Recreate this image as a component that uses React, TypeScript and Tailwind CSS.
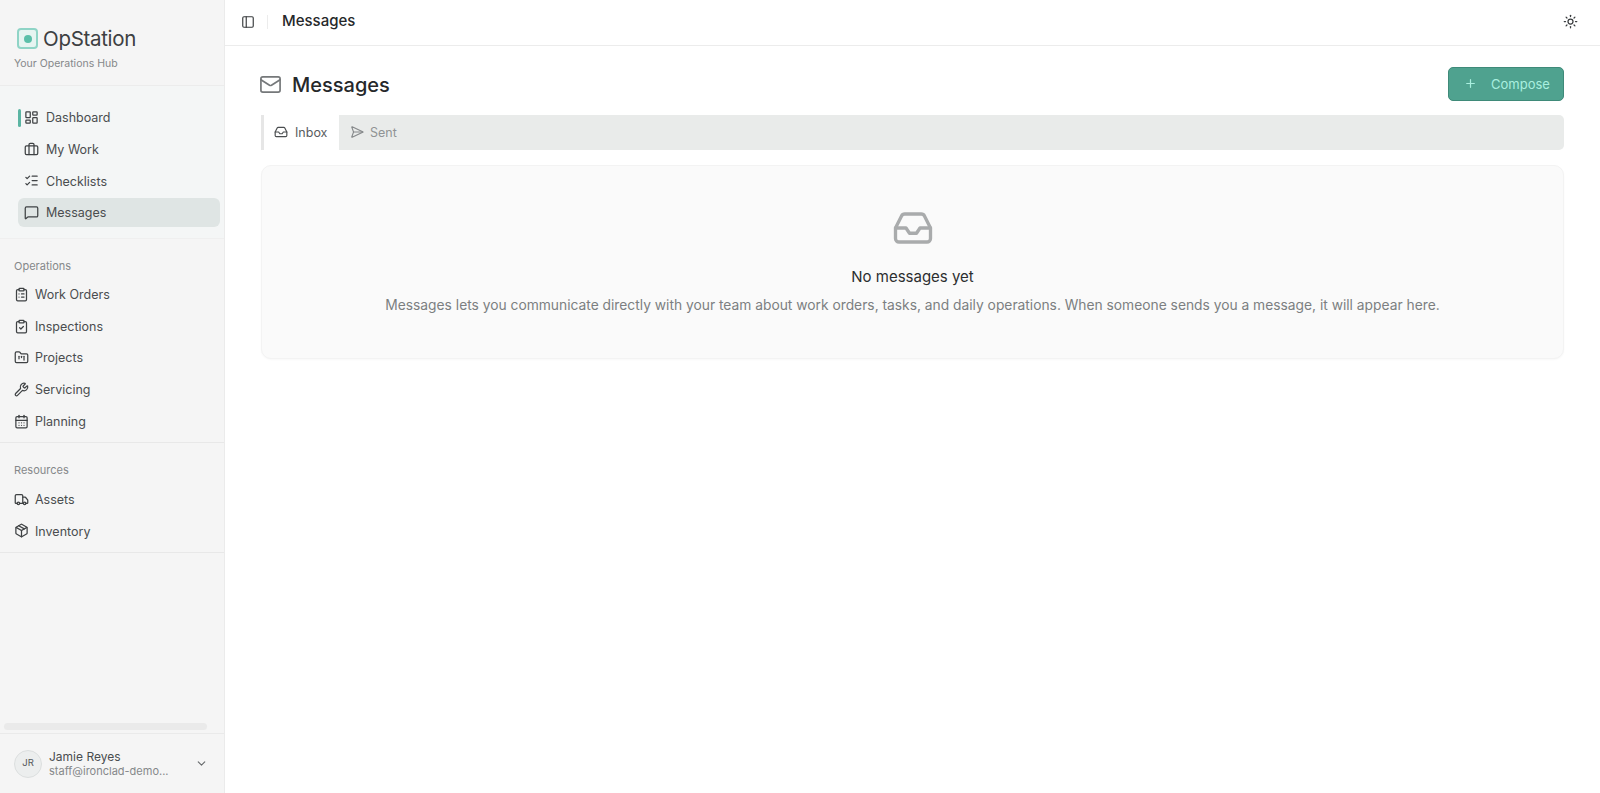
import {
  Briefcase,
  CalendarDays,
  ChevronDown,
  ClipboardCheck,
  ClipboardList,
  FolderKanban,
  Inbox,
  LayoutDashboard,
  ListChecks,
  Mail,
  MessageSquare,
  Package,
  PanelLeft,
  Plus,
  SendHorizontal,
  Sun,
  Truck,
  Wrench,
} from "lucide-react";

const mainNav = [
  { label: "Dashboard", icon: LayoutDashboard },
  { label: "My Work", icon: Briefcase },
  { label: "Checklists", icon: ListChecks },
  { label: "Messages", icon: MessageSquare, active: true },
];

const operations = [
  { label: "Work Orders", icon: ClipboardList },
  { label: "Inspections", icon: ClipboardCheck },
  { label: "Projects", icon: FolderKanban },
  { label: "Servicing", icon: Wrench },
  { label: "Planning", icon: CalendarDays },
];

const resources = [
  { label: "Assets", icon: Truck },
  { label: "Inventory", icon: Package },
];

function NavRow({ label, icon: Icon }: { label: string; icon: typeof Mail }) {
  return (
    <div className="flex h-[31.7px] items-center gap-[6px] pl-[14px] text-[12.5px] text-[#4a4d4f]">
      <Icon className="-mt-[2px] h-[15px] w-[15px] text-[#3f4244]" strokeWidth={2} />
      <span>{label}</span>
    </div>
  );
}

function Section({ title, items, top }: { title: string; items: typeof operations; top: string }) {
  return (
    <div className="border-b border-[#e8e8e8] pb-[4px]">
      <div className={`pl-[14px] pb-[6px] text-[11px] leading-[16px] text-[#85888a] ${top}`}>{title}</div>
      {items.map((item) => (
        <NavRow key={item.label} {...item} />
      ))}
    </div>
  );
}

export default function App() {
  return (
    <div className="flex h-[793px] w-[1600px] overflow-hidden bg-white font-['Inter',sans-serif] text-[#26282a]">
      <aside className="flex w-[225px] shrink-0 flex-col border-r border-[#ebebeb] bg-[#f5f5f5]">
        <div className="h-[86px] shrink-0 border-b border-[#ececec] pl-[14px] pt-[26px]">
          <div className="flex items-center gap-[5px] pl-[3px]">
            <div className="-mt-[1px] flex h-[21px] w-[21px] items-center justify-center rounded-[4px] border-2 border-[#8fd4c6] bg-[#e6f4f1]">
              <div className="h-[8px] w-[8px] rounded-full bg-[#5bbfa9]" />
            </div>
            <span className="text-[20.5px] leading-[26px] tracking-[-0.3px] text-[#3d4042]">OpStation</span>
          </div>
          <div className="mt-[5px] text-[10.5px] leading-[14px] text-[#85888a]">Your Operations Hub</div>
        </div>

        <div className="h-[153px] shrink-0 border-b border-[#efefef] bg-[#f4f6f6] pl-[18px] pr-[4px] pt-[17px]">
          {mainNav.map(({ label, icon: Icon, active }) => (
            <div
              key={label}
              className={`relative mb-[2.7px] flex h-[29px] items-center gap-[7px] rounded-[6px] pl-[6px] text-[12.5px] text-[#4a4d4f] ${active ? "bg-[#dfe5e4]" : ""}`}
            >
              {label === "Dashboard" && (
                <div className="absolute left-0 top-[6px] h-[18px] w-[3px] rounded-sm bg-[#5bb5a3]" />
              )}
              <Icon className="h-[15px] w-[15px] text-[#3f4244]" strokeWidth={2} />
              <span className="mt-[2px]">{label}</span>
            </div>
          ))}
        </div>

        <Section title="Operations" items={operations} top="pt-[18.5px]" />
        <Section title="Resources" items={resources} top="pt-[19.5px]" />

        <div className="mt-auto">
          <div className="mx-[4px] mb-[3px] h-[7px] w-[203px] rounded-full bg-[#eaeaea]" />
          <div className="flex h-[60px] items-center border-t border-[#eaeaea] pl-[14px] pr-[16px]">
            <div className="flex h-[28px] w-[28px] shrink-0 items-center justify-center rounded-full border border-[#dcdfdf] bg-[#eceeee] text-[9.5px] text-[#55585a]">
              JR
            </div>
            <div className="ml-[7px] min-w-0 flex-1">
              <div className="text-[12px] leading-[15px] text-[#4a4d4f]">Jamie Reyes</div>
              <div className="text-[11px] leading-[15px] text-[#85888a]">staff@ironclad-demo...</div>
            </div>
            <ChevronDown className="h-[13px] w-[13px] text-[#66696b]" />
          </div>
        </div>
      </aside>

      <main className="min-w-0 flex-1">
        <header className="flex h-[46px] items-center border-b border-[#ececec] pb-[2px] pl-[16px] pr-[22px]">
          <PanelLeft className="h-[14px] w-[14px] text-[#3a3d3f]" strokeWidth={2} />
          <div className="ml-[12px] mr-[14px] h-[14px] w-px bg-[#ececec]" />
          <span className="text-[15px] font-medium">Messages</span>
          <Sun className="ml-auto h-[15px] w-[15px] text-[#3a3d3f]" strokeWidth={2} />
        </header>

        <div className="px-[36px] pt-[21px]">
          <div className="flex h-[33px] items-center">
            <Mail className="-ml-[2px] mt-[2px] h-[23px] w-[23px] text-[#75787a]" strokeWidth={1.75} />
            <h1 className="ml-[10px] mt-[2px] text-[20px] font-medium">Messages</h1>
            <button className="ml-auto flex h-[34px] w-[116px] items-center rounded-[5px] border border-[#3f8a79] bg-[#4fa28f] pl-[15px] text-[13px] text-[#a9efdf]">
              <Plus className="h-[13px] w-[13px]" strokeWidth={2.25} />
              <span className="ml-[14px] mt-[2px]">Compose</span>
            </button>
          </div>

          <div className="mt-[15px] flex h-[35px] items-stretch rounded-[5px] bg-[#e9ebea]">
            <div className="flex w-[78px] items-center gap-[7px] border-l-[3px] border-[#e6e6e6] bg-white pl-[10px] text-[12.5px] text-[#5a5d5f]">
              <Inbox className="-mt-[1px] h-[14px] w-[14px] text-[#4a4d4f]" strokeWidth={2} />
              <span className="mt-[2px]">Inbox</span>
            </div>
            <div className="flex items-center gap-[6px] pl-[11px] text-[12.5px] text-[#909395]">
              <SendHorizontal className="-mt-[1px] h-[14px] w-[14px] text-[#85888a]" strokeWidth={2} />
              <span className="mt-[2px]">Sent</span>
            </div>
          </div>

          <div className="mt-[15px] flex h-[194px] flex-col items-center rounded-[10px] border border-[#f3f3f3] bg-[#fafafa] pt-[41px] shadow-[0_1px_2px_rgba(0,0,0,0.03)]">
            <Inbox className="h-[42px] w-[42px] text-[#a9abac]" strokeWidth={1.9} />
            <div className="mt-[17px] text-[15px] leading-[22px] text-[#2c2e30]">No messages yet</div>
            <p className="mt-[7px] text-[13.8px] leading-[20px] text-[#7c7f81]">
              Messages lets you communicate directly with your team about work orders, tasks, and daily operations. When someone sends you a message, it will appear here.
            </p>
          </div>
        </div>
      </main>
    </div>
  );
}
